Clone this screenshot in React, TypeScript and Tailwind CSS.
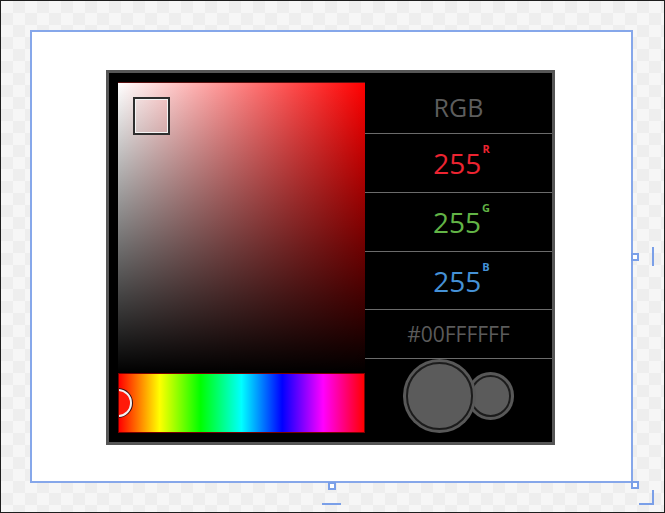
import { FC } from "react";

const Channel: FC<{ value: string; label: string; color: string; h: string }> = ({
  value,
  label,
  color,
  h,
}) => (
  <div className={`${h} flex items-center justify-center ${color}`}>
    <div className="flex items-start pl-[6px]">
      <span className="text-[28px] leading-none">{value}</span>
      <span className="text-[11px] font-bold leading-none -mt-[6px] ml-[1px]">
        {label}
      </span>
    </div>
  </div>
);

const Divider: FC = () => <div className="h-px bg-[#6b6b6b]" />;

const Swatch: FC<{ size: string; className?: string }> = ({
  size,
  className = "",
}) => (
  <div
    className={`${size} rounded-full bg-[#585858] p-[3px] shrink-0 ${className}`}
  >
    <div className="w-full h-full rounded-full border-2 border-[#1c1c1c] bg-[#5b5b5b]" />
  </div>
);

const Handle: FC<{ className: string }> = ({ className }) => (
  <div
    className={`absolute w-[8px] h-[8px] border-2 border-[#7a9fe8] bg-white ${className}`}
  />
);

const App: FC = () => {
  return (
    <div
      className="relative w-[665px] h-[513px] border border-[#1e1e1e] bg-[repeating-conic-gradient(#eeeeee_0%_25%,#f6f6f6_0%_50%)] bg-[length:24px_24px] p-[29px] overflow-hidden"
      style={{ fontFamily: '"Open Sans", "Noto Sans", sans-serif' }}
    >
      <div className="w-[603px] h-[453px] bg-white border-2 border-[#86a7ea] flex items-center justify-center pt-[2px] pr-[2px]">
        <div className="w-[449px] h-[375px] border-[3px] border-[#565656] bg-black pl-[9px] py-[9px] flex">
          <div className="w-[247px] flex flex-col">
            <div className="relative h-[291px] border-t border-[#5a1010] bg-[linear-gradient(to_top,#000,transparent),linear-gradient(to_right,#fff,#f00)]">
              <div className="absolute left-[15px] top-[14px] w-[37px] h-[38px] border-2 border-[#2e2e2e]">
                <div className="w-full h-full border border-[#f4f4f4]" />
              </div>
            </div>
            <div className="relative h-[60px] overflow-hidden border border-[#7a0000] bg-[linear-gradient(to_right,#f00,#ff0_16.6%,#0f0_33.3%,#0ff_50%,#00f_66.6%,#f0f_83.3%,#f00)]">
              <div className="absolute -left-[15px] top-[15px] w-[28px] h-[28px] rounded-full bg-[#ff1a0a] border-2 border-[#f2f2f2] ring-1 ring-[#3a1010]" />
            </div>
          </div>
          <div className="flex-1 flex flex-col">
            <div className="h-[51px] flex items-center justify-center text-[25px] text-[#5d5d5d] leading-none">
              RGB
            </div>
            <Divider />
            <Channel value="255" label="R" color="text-[#ec2431]" h="h-[58px]" />
            <Divider />
            <Channel value="255" label="G" color="text-[#62b446]" h="h-[58px]" />
            <Divider />
            <Channel value="255" label="B" color="text-[#4591d6]" h="h-[57px]" />
            <Divider />
            <div className="h-[48px] flex items-center justify-center text-[21px] text-[#5b5b5b] leading-none">
              #00FFFFFF
            </div>
            <Divider />
            <div className="flex-1 flex items-center justify-center">
              <Swatch size="w-[73px] h-[74px]" className="relative z-10" />
              <Swatch size="w-[47px] h-[48px]" className="-ml-[9px]" />
            </div>
          </div>
        </div>
      </div>

      <Handle className="left-[630px] top-[252px]" />
      <Handle className="left-[327px] top-[481px]" />
      <Handle className="left-[630px] top-[480px]" />
      <div className="absolute left-[651px] top-[246px] w-[2px] h-[19px] bg-[#7a9fe8]" />
      <div className="absolute left-[321px] top-[502px] w-[19px] h-[2px] bg-[#7a9fe8]" />
      <div className="absolute left-[651px] top-[489px] w-[2px] h-[15px] bg-[#7a9fe8]" />
      <div className="absolute left-[638px] top-[502px] w-[15px] h-[2px] bg-[#7a9fe8]" />
    </div>
  );
};

export default App;
